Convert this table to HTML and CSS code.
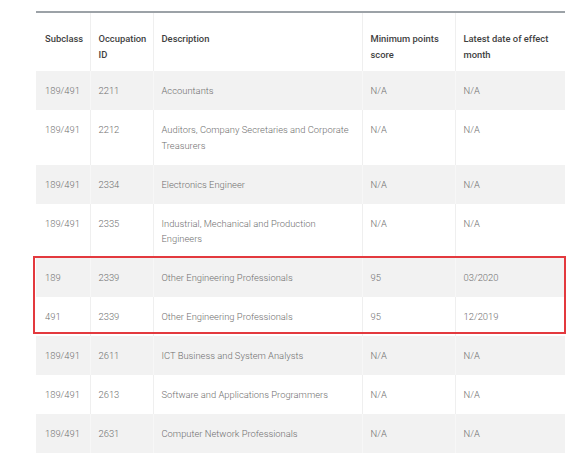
FILE: index.html
```html
<!DOCTYPE html>
<html>
<head>
<meta charset="utf-8">
<link rel="stylesheet" href="styles.css">
</head>
<body>
<div class="wrap">
  <table class="occ">
    <colgroup>
      <col class="c1"><col class="c2"><col class="c3"><col class="c4"><col class="c5">
    </colgroup>
    <thead>
      <tr>
        <th>Subclass</th>
        <th>Occupation ID</th>
        <th>Description</th>
        <th>Minimum points score</th>
        <th>Latest date of effect month</th>
      </tr>
    </thead>
    <tbody>
      <tr class="g"><td>189/491</td><td>2211</td><td>Accountants</td><td>N/A</td><td>N/A</td></tr>
      <tr><td>189/491</td><td>2212</td><td>Auditors, Company Secretaries and Corporate Treasurers</td><td>N/A</td><td>N/A</td></tr>
      <tr class="g"><td>189/491</td><td>2334</td><td>Electronics Engineer</td><td>N/A</td><td>N/A</td></tr>
      <tr><td>189/491</td><td>2335</td><td>Industrial, Mechanical and Production Engineers</td><td>N/A</td><td>N/A</td></tr>
      <tr class="g"><td>189</td><td>2339</td><td>Other Engineering Professionals</td><td>95</td><td>03/2020</td></tr>
      <tr><td>491</td><td>2339</td><td>Other Engineering Professionals</td><td>95</td><td>12/2019</td></tr>
      <tr class="g"><td>189/491</td><td>2611</td><td>ICT Business and System Analysts</td><td>N/A</td><td>N/A</td></tr>
      <tr><td>189/491</td><td>2613</td><td>Software and Applications Programmers</td><td>N/A</td><td>N/A</td></tr>
      <tr class="g"><td>189/491</td><td>2631</td><td>Computer Network Professionals</td><td>N/A</td><td>N/A</td></tr>
    </tbody>
  </table>
  <div class="highlight"></div>
</div>
</body>
</html>
```
FILE: styles.css
```css
html, body {
  margin: 0;
  padding: 0;
  background: #fff;
}
body {
  font-family: Roboto, "Liberation Sans", sans-serif;
}
.wrap {
  position: relative;
  margin: 11px 0 0 36px;
  width: 529px;
  border-top: 2px solid #9ca2a7;
}
.occ {
  width: 529px;
  border-collapse: collapse;
  table-layout: fixed;
}
.c1 { width: 54px; }
.c2 { width: 63px; }
.c3 { width: 209px; }
.c4 { width: 93px; }
.c5 { width: 110px; }
.occ th, .occ td {
  text-align: left;
  vertical-align: top;
  font-size: 9.4px;
  line-height: 15.5px;
  border-left: 1px solid #efefef;
  padding: 0 8px 0 8px;
}
.occ th:first-child, .occ td:first-child {
  border-left: none;
  padding-left: 9px;
}
.occ th {
  font-weight: 500;
  color: #3f3f3f;
  padding-top: 18px;
  padding-bottom: 9px;
}
.occ td {
  color: #6f6f6f;
  font-weight: 300;
  padding-top: 12px;
  padding-bottom: 11.5px;
}
.occ tr.g td {
  background: #f2f2f2;
  border-left-color: #f7f7f7;
}
.occ tr.g td:first-child {
  border-left: none;
}
.highlight {
  position: absolute;
  left: -3px;
  top: 243px;
  width: 529px;
  height: 74px;
  border: 2px solid #e3393e;
}
```
